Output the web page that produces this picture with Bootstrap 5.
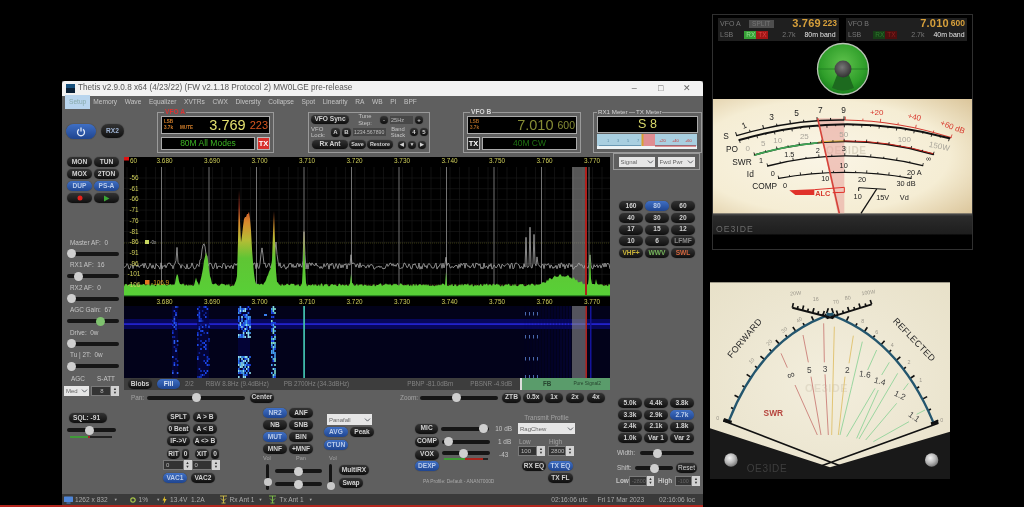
<!DOCTYPE html>
<html lang="en">
<head>
<meta charset="UTF-8">
<meta name="viewport" content="width=device-width, initial-scale=1.0">
<title>Thetis</title>
<link href="https://cdn.jsdelivr.net/npm/bootstrap@5.3.0/dist/css/bootstrap.min.css" rel="stylesheet">
<style>
html, body { height: 100%; margin: 0; background: #000; overflow: hidden; font-family: "Liberation Sans", Arial, sans-serif; }
.desk-window { position: absolute; filter: blur(.55px); }
.progress-line { position: absolute; left: 0; top: 505px; width: 703px; height: 2px; background: #b3261e; }

/* main radio window */
.thetis { left: 62px; top: 81px; width: 641px; height: 424px; background: #5f5f5f; display: flex; flex-direction: column; overflow: hidden; }
.title-bar { height: 15px; background: #f2f2f2; color: #555; font-size: 8.2px; display: flex; align-items: center; padding-left: 4px; gap: 3px; border-radius: 3px 3px 0 0; }
.title-icon { width: 9px; height: 9px; background: linear-gradient(#16507c 50%, #0b2036 50%); }
.title-ctl { width: 23.5px; text-align: center; color: #666; font-size: 9px; line-height: 1; }
.menu-row { height: 12px; display: flex; color: #c4c4c4; font-size: 6.6px; align-items: center; padding-left: 3px; }
.menu-row span { padding: 0 3.1px; margin-right: 1.4px; white-space: nowrap; }
.menu-row .menu-hot { background: #b9d5ee; color: #8aa; padding: 2px 4px; margin-right: 0; }

.rig-grid { display: grid; grid-template-columns: 62px 486px 93px; grid-template-rows: 49px 233px 15px 89px; }
.rig-top { grid-column: 1 / 4; display: flex; align-items: flex-start; }
.rig-left { grid-column: 1; grid-row: 2 / 4; padding-left: 5px; }
.rig-centre { grid-column: 2; grid-row: 2; }
.rig-panrow { grid-column: 2; grid-row: 3; display: flex; align-items: center; }
.rig-right { grid-column: 3; grid-row: 2 / 5; margin-top: -4px; }
.rig-bottom { grid-column: 1 / 3; grid-row: 4; display: flex; align-items: flex-start; }

.btn.rig-pill { display: flex; align-items: center; justify-content: center; height: 10px; padding: 0; border: 0; border-radius: 5px; background: linear-gradient(#333, #0f0f0f); color: #d2d2d2; font-size: 6.6px; font-weight: 700; line-height: 1; white-space: nowrap; box-shadow: 0 0 1px #222; }
.btn.rig-on { background: linear-gradient(#3f6fc4, #1f4590); color: #b9cbea; }
.pill-grid { display: grid; gap: 2px; }
.rig-label { color: #c6c6c6; font-size: 6.4px; line-height: 10px; white-space: nowrap; }
.dim-label { color: #a3a3a3; }

.form-range.rig-range { display: block; height: 12px; padding: 0; }
.rig-range::-webkit-slider-runnable-track { height: 4px; background: #161616; border-radius: 2px; }
.rig-range::-webkit-slider-thumb { width: 9px; height: 9px; margin-top: -2.5px; background: #cfcfcf; border-radius: 50%; }
.rig-range-green::-webkit-slider-thumb { background: #7fc26f; }

.form-select.rig-select { height: 10px; min-height: 0; padding: 0 8px 0 2px; font-size: 6px; line-height: 10px; color: #666; background-color: #e6e6e6; background-position: right 1px center; background-size: 7px 6px; border: 0; border-radius: 0; }
.rig-spin { display: flex; height: 10px; font-size: 6px; line-height: 10px; color: #bbb; }
.rig-spin-val { flex: 1; background: #333; padding-left: 2px; border: 1px solid #7a7a7a; line-height: 8px; }
.rig-spin-arrows { width: 8px; background: #d2d2d2; color: #333; font-size: 4px; line-height: 4.5px; text-align: center; display: flex; flex-direction: column; justify-content: center; }

.rig-group { position: relative; margin-top: 4px; height: 41px; border: 1.5px solid #9a9a9a; }
.rig-legend { position: absolute; top: -6px; left: 6px; background: #5f5f5f; padding: 0 1px; font-size: 6.6px; line-height: 10px; font-weight: 700; color: #d5d5d5; white-space: nowrap; }
.vfo-top { height: 18px; margin: 3px 3px 0; background: #000; border: 1px solid #aaa; display: flex; align-items: center; position: relative; }
.vfo-tiny { font-size: 4.6px; font-weight: 700; color: #d5802b; line-height: 6.5px; padding-left: 2px; width: 16px; }
.vfo-freq { font-size: 14.5px; line-height: 1; margin-left: auto; }
.vfo-sub { font-size: 11px; line-height: 1; margin: 1px 1px 0 4px; }
.vfo-low { display: flex; gap: 2px; margin: 2.5px 3px 0; height: 13px; }
.vfo-band { flex: 1; background: #000; border: 1px solid #aaa; text-align: center; font-size: 8.5px; line-height: 11px; }
.vfo-tx { width: 13px; font-size: 7.5px; font-weight: 700; line-height: 11px; text-align: center; color: #fff; border: 1px solid #bbb; }

.sync-row { display: flex; align-items: center; }
.sync-box { background: #474747; color: #bbb; font-size: 5.6px; line-height: 8px; height: 8px; padding-left: 1px; white-space: nowrap; overflow: hidden; }
.btn.rig-round { width: 8px; height: 8px; font-size: 6px; border-radius: 4px; flex: none; }

.info-bar { height: 12px; background: #3d3d3d; color: #828282; font-size: 6.3px; display: flex; align-items: center; white-space: nowrap; }
.fb-box { margin-left: auto; width: 90px; height: 12px; background: #5a9c6b; border-left: 2px solid #ddd; display: flex; align-items: center; color: #27452f; }

.vslide { width: 3px; height: 26px; background: #151515; border-radius: 2px; display: flex; flex-direction: column; justify-content: flex-end; align-items: center; }
.vslide-knob { flex: none; width: 8px; height: 8px; border-radius: 50%; background: #c8c8c8; margin-bottom: 4px; }
.level-bar { height: 2px; display: flex; background: #222; }
.level-g { background: #3f9a37; }
.level-r { background: #a8241c; }

.status-bar { height: 11px; background: #3a3a3a; color: #aaa; font-size: 6.6px; display: flex; align-items: center; white-space: nowrap; }
.status-bar svg { flex: none; }

/* multimeter window */
.mm-window { left: 712px; top: 14px; width: 261px; height: 236px; border: 1px solid #303030; display: flex; flex-direction: column; background: #000; }
.mm-head { display: flex; gap: 7px; padding: 3px 5px 0; }
.mm-panel { height: 23px; background: #1f1f1f; color: #777; font-size: 7px; padding: 0 2px; flex: 1; }
.mm-line { display: flex; align-items: center; height: 11.5px; white-space: nowrap; }
.mm-chip { display: inline-block; height: 8px; line-height: 8px; padding: 0 2px; font-size: 6.5px; text-align: center; }
.mm-freq { margin-left: auto; color: #d7a03b; font-size: 11px; font-weight: 700; line-height: 1; letter-spacing: .2px; }
.mm-sub { color: #d7a03b; font-size: 8.5px; font-weight: 700; margin-left: 2px; }
.mm-band { color: #e5e5e5; margin-left: 9px; }
.mm-svg { display: block; }

/* swr window */
.swr-window { left: 709px; top: 279px; width: 242px; height: 209px; background: #000; }
.swr-window svg { display: block; }
</style>
</head>
<body>

<div class="progress-line"></div>

<div class="desk-window thetis">
  <div class="title-bar">
    <div class="title-icon"></div>
    <span>Thetis v2.9.0.8 x64 (4/23/22) (FW v2.1.18 Protocol 2) MW0LGE pre-release</span>
    <span class="title-ctl ms-auto">&#8211;</span><span class="title-ctl">&#9633;</span><span class="title-ctl me-1">&#10005;</span>
  </div>
  <div class="menu-row">
    <span class="menu-hot">Setup</span><span>Memory</span><span>Wave</span><span>Equalizer</span><span>XVTRs</span><span>CWX</span><span>Diversity</span><span>Collapse</span><span>Spot</span><span>Linearity</span><span>RA</span><span>WB</span><span>PI</span><span>BPF</span>
  </div>

  <div class="rig-grid">
    <div class="rig-top">
      <button class="btn rig-pill rig-on ms-1" style="width:30px;height:15px;border-radius:8px;margin-top:16px">
        <svg width="10" height="10" viewBox="0 0 10 10"><path d="M3 2.4A3.5 3.5 0 1 0 7 2.4" fill="none" stroke="#dfe8f7" stroke-width="1.3"/><path d="M5 .6V4.6" stroke="#dfe8f7" stroke-width="1.3"/></svg>
      </button>
      <button class="btn rig-pill" style="width:23px;height:14px;border-radius:7px;margin:16px 0 0 5px;color:#9fb4d4">RX2</button>

      <div class="rig-group" style="width:117px;margin-left:33px">
        <span class="rig-legend" style="color:#d33">VFO A</span>
        <div class="vfo-top">
          <div class="vfo-tiny">LSB<br>3.7k</div>
          <div class="vfo-tiny" style="width:auto;align-self:flex-end;padding-bottom:2px">MUTE</div>
          <span class="vfo-freq" style="color:#e3e06e">3.769</span><span class="vfo-sub" style="color:#d4551f">223</span>
        </div>
        <div class="vfo-low">
          <div class="vfo-band" style="color:#3cb423">80M All Modes</div>
          <div class="vfo-tx" style="background:#d8312d">TX</div>
        </div>
      </div>

      <div class="rig-group" style="width:122px;margin-left:34px">
        <div class="sync-row" style="height:12px;padding:1px 0 0 2px">
          <button class="btn rig-pill" style="width:38px;height:9px">VFO Sync</button>
          <span class="rig-label text-center" style="width:26px;margin-left:3px;line-height:6.5px;font-size:5.8px">Tune<br>Step:</span>
          <button class="btn rig-pill rig-round" style="margin-left:2px">-</button>
          <span class="sync-box" style="width:23px;margin-left:2px">25Hz</span>
          <button class="btn rig-pill rig-round" style="margin-left:2px">+</button>
        </div>
        <div class="sync-row" style="height:13px;padding:1px 0 0 2px">
          <span class="rig-label" style="width:20px;line-height:6.5px;font-size:6px">VFO<br>Lock:</span>
          <button class="btn rig-pill rig-round" style="width:9px;height:9px;margin-right:2px">A</button>
          <button class="btn rig-pill rig-round" style="width:9px;height:9px">B</button>
          <span class="sync-box" style="width:33px;margin-left:2px;font-size:5.2px">1234.567890</span>
          <span class="rig-label text-center" style="width:24px;line-height:6.5px;font-size:5.8px">Band<br>Stack</span>
          <button class="btn rig-pill rig-round" style="margin-right:2px">4</button>
          <button class="btn rig-pill rig-round">5</button>
        </div>
        <div class="sync-row" style="height:12px;padding:1px 0 0 2px">
          <button class="btn rig-pill" style="width:36px;height:9px;margin-left:1px">Rx Ant</button>
          <button class="btn rig-pill" style="width:17px;height:9px;margin-left:1px;font-size:5.4px">Save</button>
          <button class="btn rig-pill" style="width:26px;height:9px;margin-left:1px;font-size:5.4px">Restore</button>
          <button class="btn rig-pill rig-round" style="margin-left:5px;margin-right:2px;font-size:5px">&#9664;</button>
          <button class="btn rig-pill rig-round" style="margin-right:2px;font-size:5px">&#9660;</button>
          <button class="btn rig-pill rig-round" style="font-size:5px">&#9654;</button>
        </div>
      </div>

      <div class="rig-group" style="width:118px;margin-left:33px">
        <span class="rig-legend">VFO B</span>
        <div class="vfo-top">
          <div class="vfo-tiny" style="opacity:.8">LSB<br>3.7k</div>
          <span class="vfo-freq" style="color:#868d35">7.010</span><span class="vfo-sub" style="color:#868d35;font-size:10.5px">600</span>
        </div>
        <div class="vfo-low">
          <div class="vfo-tx" style="background:#222">TX</div>
          <div class="vfo-band" style="color:#1f7312">40M CW</div>
        </div>
      </div>

      <div class="rig-group" style="width:109px;margin-left:12px">
        <span class="rig-legend" style="font-weight:400;left:3px;font-size:6.2px">RX1 Meter</span>
        <span class="rig-legend" style="font-weight:400;left:41px;font-size:6.2px">TX Meter</span>
        <div class="vfo-top d-block text-center" style="height:17px;margin-top:3px;color:#d9d86a;font-size:12.5px;line-height:15px;font-weight:500">S 8</div>
        <svg width="100" height="15" viewBox="0 0 100 15" style="display:block;margin:1px 0 0 3px">
          <rect width="100" height="15" fill="#a9cfe0"/><rect y="12" width="100" height="3" fill="#eef4f6"/>
          <rect x="46" width="12" height="12" fill="#e08d92"/><rect x="44.5" width="2" height="12" fill="#d8a030"/>
          <path d="M2 11.5H44M58 11.5H99" stroke="#5b8ca8" stroke-width=".8"/><path d="M58 12H99" stroke="#c33" stroke-width="1"/>
          <text x="10" y="8" font-size="4" fill="#5f8fa8">1</text><text x="20" y="8" font-size="4" fill="#5f8fa8">3</text><text x="30" y="8" font-size="4" fill="#5f8fa8">5</text><text x="40" y="8" font-size="4" fill="#5f8fa8">7</text>
          <text x="62" y="8" font-size="4" fill="#c33">+20</text><text x="75" y="8" font-size="4" fill="#c33">+40</text><text x="88" y="8" font-size="4" fill="#c33">+60</text>
        </svg>
      </div>
    </div>

    <div class="rig-left">
      <div class="pill-grid" style="grid-template-columns:25px 25px">
        <button class="btn rig-pill">MON</button><button class="btn rig-pill">TUN</button>
        <button class="btn rig-pill">MOX</button><button class="btn rig-pill">2TON</button>
        <button class="btn rig-pill rig-on">DUP</button><button class="btn rig-pill rig-on">PS-A</button>
        <button class="btn rig-pill"><svg width="6" height="6" viewBox="0 0 6 6"><circle cx="3" cy="3" r="2.5" fill="#e4211c"/></svg></button>
        <button class="btn rig-pill"><svg width="7" height="7" viewBox="0 0 7 7"><path d="M1 .5L6.5 3.5L1 6.5Z" fill="#3aa635"/></svg></button>
      </div>
      <div style="margin-top:34.500px;width:52px">
        <div class="rig-label" style="padding-left:3px">Master AF:&nbsp; 0</div>
        <input type="range" class="form-range rig-range" min="0" max="100" value="0">
        <div class="rig-label" style="padding-left:3px;margin-top:.6px">RX1 AF:&nbsp; 16</div>
        <input type="range" class="form-range rig-range" min="0" max="100" value="16">
        <div class="rig-label" style="padding-left:3px;margin-top:.6px">RX2 AF:&nbsp; 0</div>
        <input type="range" class="form-range rig-range" min="0" max="100" value="0">
        <div class="rig-label" style="padding-left:3px;margin-top:.6px">AGC Gain:&nbsp; 67</div>
        <input type="range" class="form-range rig-range rig-range-green" min="0" max="100" value="67">
        <div class="rig-label" style="padding-left:3px;margin-top:.6px">Drive:&nbsp; 0w</div>
        <input type="range" class="form-range rig-range" min="0" max="100" value="0">
        <div class="rig-label" style="padding-left:3px;margin-top:.6px">Tu | 2T:&nbsp; 0w</div>
        <input type="range" class="form-range rig-range" min="0" max="100" value="0">
      </div>
      <div class="d-flex rig-label" style="margin-top:1.4px;padding-left:4px"><span style="width:26px">AGC</span><span>S-ATT</span></div>
      <div class="d-flex" style="margin-top:2.500px;margin-left:-3px;gap:2px;width:55px">
        <select class="form-select rig-select" style="width:25px"><option>Med</option></select>
        <div class="rig-spin" style="width:28px"><span class="rig-spin-val text-center">8</span><span class="rig-spin-arrows"><span>&#9650;</span><span>&#9660;</span></span></div>
      </div>
    </div>

    <div class="rig-centre">
      <svg id="pan" width="486" height="221" viewBox="124 157 486 221" style="display:block">
        <defs>
          <linearGradient id="peakFill" gradientUnits="userSpaceOnUse" x1="0" y1="296" x2="0" y2="206">
            <stop offset="0" stop-color="#58d037"/><stop offset=".42" stop-color="#5fc534"/><stop offset=".62" stop-color="#b5bd35"/><stop offset=".82" stop-color="#d98a2c"/><stop offset="1" stop-color="#c8402a"/>
          </linearGradient>
        </defs>
        <rect x="124" y="157" width="486" height="221" fill="#000"/>
        <g id="panGrid"></g>
        <rect x="572" y="167" width="15" height="129" fill="#8a8a8a" opacity=".62"/>
        <g id="panTrace"></g>
        <rect x="585" y="167" width="2" height="129" fill="#b0201c"/>
        <rect x="124" y="295" width="486" height="1.3" fill="#2f8a22"/>
        <g id="fall"></g>
        <rect x="572" y="306" width="15" height="72" fill="#8a8a8a" opacity=".6"/>
        <rect x="585.5" y="306" width="1.5" height="72" fill="#b0201c"/>
        <g id="panText" font-family="Liberation Sans, Arial, sans-serif" font-size="6.4" fill="#cfcf5a"></g>
        <rect x="124" y="156.5" width="5" height="4" fill="#e01010"/>
      </svg>
      <div class="info-bar">
        <button class="btn rig-pill ms-1" style="width:24px">Blobs</button>
        <button class="btn rig-pill rig-on" style="width:23px;margin-left:5px;color:#dbe5f5">Fill</button>
        <span style="margin-left:5px">2/2</span>
        <span style="margin-left:12px">RBW 8.8Hz (9.4dBHz)</span>
        <span style="margin-left:15px">PB 2700Hz (34.3dBHz)</span>
        <span style="margin-left:58px">PBNP -81.0dBm</span>
        <span style="margin-left:17px">PBSNR -4.9dB</span>
        <div class="fb-box">
          <span style="margin-left:21px;font-weight:700">FB</span>
          <span style="margin-left:22px;font-size:4.8px">Pure Signal2</span>
        </div>
      </div>
    </div>

    <div class="rig-panrow">
      <span class="rig-label dim-label" style="width:23px;padding-left:7px">Pan:</span>
      <input type="range" class="form-range rig-range" style="width:98px" min="0" max="100" value="50">
      <button class="btn rig-pill" style="width:24px;margin-left:5px">Center</button>
      <span class="rig-label dim-label" style="margin-left:126px;width:20px">Zoom:</span>
      <input type="range" class="form-range rig-range" style="width:78px" min="0" max="100" value="47">
      <button class="btn rig-pill" style="width:19px;margin-left:4px">ZTB</button>
      <button class="btn rig-pill" style="width:20px;margin-left:2px">0.5x</button>
      <button class="btn rig-pill" style="width:18px;margin-left:2px">1x</button>
      <button class="btn rig-pill" style="width:18px;margin-left:3px">2x</button>
      <button class="btn rig-pill" style="width:18px;margin-left:3px">4x</button>
    </div>

    <div class="rig-right">
      <div class="d-flex align-items-center" style="width:87px;height:17px;margin-left:3px;border:1.5px solid #9a9a9a;gap:3px;padding-left:4.5px">
        <select class="form-select rig-select" style="width:36px"><option>Signal</option></select>
        <select class="form-select rig-select" style="width:37px"><option>Fwd Pwr</option></select>
      </div>
      <div class="pill-grid" style="grid-template-columns:24px 24px 24px;margin:31px 0 0 9px;column-gap:2px;row-gap:1.8px">
        <button class="btn rig-pill">160</button><button class="btn rig-pill rig-on">80</button><button class="btn rig-pill">60</button>
        <button class="btn rig-pill">40</button><button class="btn rig-pill">30</button><button class="btn rig-pill">20</button>
        <button class="btn rig-pill">17</button><button class="btn rig-pill">15</button><button class="btn rig-pill">12</button>
        <button class="btn rig-pill">10</button><button class="btn rig-pill">6</button><button class="btn rig-pill" style="color:#8a8a8a">LFMF</button>
        <button class="btn rig-pill" style="color:#c9b337">VHF+</button><button class="btn rig-pill" style="color:#75b55a">WWV</button><button class="btn rig-pill" style="color:#d3663e">SWL</button>
      </div>
      <div class="pill-grid" style="grid-template-columns:24px 24px 24px;margin:140px 0 0 8px;column-gap:2px;row-gap:1.7px">
        <button class="btn rig-pill">5.0k</button><button class="btn rig-pill">4.4k</button><button class="btn rig-pill">3.8k</button>
        <button class="btn rig-pill">3.3k</button><button class="btn rig-pill">2.9k</button><button class="btn rig-pill rig-on">2.7k</button>
        <button class="btn rig-pill">2.4k</button><button class="btn rig-pill">2.1k</button><button class="btn rig-pill">1.8k</button>
        <button class="btn rig-pill">1.0k</button><button class="btn rig-pill">Var 1</button><button class="btn rig-pill">Var 2</button>
      </div>
      <div class="d-flex align-items-center" style="margin:4px 0 0 7px">
        <span class="rig-label" style="width:23px">Width:</span>
        <input type="range" class="form-range rig-range" style="width:54px" min="0" max="100" value="28">
      </div>
      <div class="d-flex align-items-center" style="margin:3px 0 0 7px">
        <span class="rig-label" style="width:18px">Shift:</span>
        <input type="range" class="form-range rig-range" style="width:38px" min="0" max="100" value="50">
        <button class="btn rig-pill" style="width:21px;margin-left:3px;font-weight:400">Reset</button>
      </div>
      <div class="d-flex align-items-center" style="margin:2px 0 0 6px">
        <span class="rig-label" style="width:13px;font-weight:700">Low</span>
        <div class="rig-spin" style="width:25px"><span class="rig-spin-val" style="color:#666;font-size:5.4px">-2800</span><span class="rig-spin-arrows"><span>&#9650;</span><span>&#9660;</span></span></div>
        <span class="rig-label" style="width:17px;margin-left:4px;font-weight:700">High</span>
        <div class="rig-spin" style="width:25px"><span class="rig-spin-val" style="color:#666;font-size:5.4px">-100</span><span class="rig-spin-arrows"><span>&#9650;</span><span>&#9660;</span></span></div>
      </div>
    </div>

    <div class="rig-bottom">
      <!-- squelch -->
      <div style="width:98px;padding:8px 0 0 7px">
        <button class="btn rig-pill justify-content-start ps-1" style="width:38px">SQL: -91</button>
        <input type="range" class="form-range rig-range" style="width:49px;margin:1px 0 0 -2px" min="0" max="100" value="45">
        <div class="level-bar" style="width:42px;margin:-.5px 0 0 1px"><div class="level-g" style="width:18px"></div><div class="level-r" style="width:2px"></div></div>
      </div>
      <!-- vfo buttons -->
      <div style="width:57px;margin-left:3px;padding-top:7px">
        <div class="pill-grid ms-1" style="grid-template-columns:23px 24px;column-gap:3px">
          <button class="btn rig-pill">SPLT</button><button class="btn rig-pill">A &gt; B</button>
          <button class="btn rig-pill">0 Beat</button><button class="btn rig-pill">A &lt; B</button>
          <button class="btn rig-pill">IF-&gt;V</button><button class="btn rig-pill">A &lt;&gt; B</button>
        </div>
        <div class="d-flex ms-1" style="margin-top:3px">
          <button class="btn rig-pill" style="width:13px">RIT</button><button class="btn rig-pill" style="width:7px;margin-left:2px">0</button>
          <button class="btn rig-pill" style="width:14px;margin-left:6px">XIT</button><button class="btn rig-pill" style="width:8px;margin-left:2px">0</button>
        </div>
        <div class="d-flex" style="margin-top:1px">
          <div class="rig-spin" style="width:28.5px"><span class="rig-spin-val">0</span><span class="rig-spin-arrows"><span>&#9650;</span><span>&#9660;</span></span></div>
          <div class="rig-spin" style="width:28.5px"><span class="rig-spin-val">0</span><span class="rig-spin-arrows"><span>&#9650;</span><span>&#9660;</span></span></div>
        </div>
        <div class="d-flex" style="margin-top:3px;gap:4px">
          <button class="btn rig-pill rig-on" style="width:24px">VAC1</button>
          <button class="btn rig-pill" style="width:24px">VAC2</button>
        </div>
      </div>
      <!-- dsp -->
      <div style="width:111px;margin-left:43px;padding-top:3px">
        <div class="d-flex" style="height:46px">
          <div class="pill-grid" style="grid-template-columns:24px 24px;gap:2px 2px;align-content:start">
            <button class="btn rig-pill rig-on">NR2</button><button class="btn rig-pill">ANF</button>
            <button class="btn rig-pill">NB</button><button class="btn rig-pill">SNB</button>
            <button class="btn rig-pill rig-on">MUT</button><button class="btn rig-pill">BIN</button>
            <button class="btn rig-pill">MNF</button><button class="btn rig-pill">+MNF</button>
          </div>
          <div style="margin-left:11px;padding-top:6px">
            <select class="form-select rig-select" style="width:45px;margin-left:3px;height:11px"><option>Panafall</option></select>
            <div class="d-flex" style="margin-top:2px;gap:2px">
              <button class="btn rig-pill rig-on" style="width:24px">AVG</button><button class="btn rig-pill" style="width:24px">Peak</button>
            </div>
            <button class="btn rig-pill rig-on" style="width:24px;margin-top:3px">CTUN</button>
          </div>
        </div>
        <div class="d-flex rig-label dim-label" style="height:8px;line-height:8px;font-size:5.6px">
          <span style="margin-left:0;width:33px">Vol</span><span style="width:33px">Pan</span><span>Vol</span>
        </div>
        <div class="d-flex" style="margin-top:2px">
          <div class="vslide" style="margin-left:3px"><div class="vslide-knob"></div></div>
          <div style="width:47px;margin-left:6px;padding-top:1px">
            <input type="range" class="form-range rig-range" min="0" max="100" value="50">
            <input type="range" class="form-range rig-range" style="margin-top:1px" min="0" max="100" value="50">
          </div>
          <div class="vslide" style="margin-left:7px"><div class="vslide-knob" style="margin-bottom:0"></div></div>
          <div style="margin-left:7px;padding-top:1px">
            <button class="btn rig-pill" style="width:30px">MultiRX</button>
            <button class="btn rig-pill" style="width:24px;margin-top:3px">Swap</button>
          </div>
        </div>
      </div>
      <!-- mic / tx -->
      <div style="width:97px;margin-left:41px;padding-top:17px">
        <div class="d-flex align-items-center" style="height:13px">
          <button class="btn rig-pill" style="width:24px">MIC</button>
          <input type="range" class="form-range rig-range" style="width:48px;margin-left:3px" min="0" max="100" value="96">
          <span class="rig-label" style="margin-left:6px">10 dB</span>
        </div>
        <div class="d-flex align-items-center" style="height:13px">
          <button class="btn rig-pill" style="width:24px">COMP</button>
          <input type="range" class="form-range rig-range" style="width:48px;margin-left:3px" min="0" max="100" value="5">
          <span class="rig-label" style="margin-left:8px">1 dB</span>
        </div>
        <div class="d-flex align-items-center" style="height:13px">
          <button class="btn rig-pill" style="width:24px">VOX</button>
          <div style="width:48px;margin-left:3px;height:13px">
            <input type="range" class="form-range rig-range" style="height:10px" min="0" max="100" value="44">
            <div class="level-bar" style="margin-left:2px;width:44px"><div class="level-g" style="width:21px"></div><div class="level-r" style="width:18px"></div></div>
          </div>
          <span class="rig-label" style="margin-left:9px">-43</span>
        </div>
        <button class="btn rig-pill rig-on" style="width:24px">DEXP</button>
        <div class="rig-label" style="font-size:4.9px;margin:6px 0 0 8px;color:#aaa">PA Profile: Default - ANAN7000D</div>
      </div>
      <div style="width:57px;margin-left:6px;padding-top:8px">
        <div class="rig-label text-center dim-label" style="height:10px">Transmit Profile</div>
        <select class="form-select rig-select" style="height:11px"><option>RagChew</option></select>
        <div class="d-flex rig-label dim-label" style="margin-top:3px;height:9px;line-height:9px;padding-left:1px"><span style="width:30px">Low</span><span>High</span></div>
        <div class="d-flex" style="gap:3px;margin-top:0">
          <div class="rig-spin" style="width:27px"><span class="rig-spin-val">100</span><span class="rig-spin-arrows"><span>&#9650;</span><span>&#9660;</span></span></div>
          <div class="rig-spin" style="width:26px"><span class="rig-spin-val">2800</span><span class="rig-spin-arrows"><span>&#9650;</span><span>&#9660;</span></span></div>
        </div>
        <div class="d-flex" style="margin:5px 0 0 4px;gap:2px">
          <button class="btn rig-pill" style="width:24px">RX EQ</button>
          <button class="btn rig-pill rig-on" style="width:25px">TX EQ</button>
        </div>
        <button class="btn rig-pill" style="width:25px;margin:2px 0 0 30px">TX FL</button>
      </div>
    </div>
  </div>

  <div class="status-bar">
    <svg width="9" height="8" viewBox="0 0 9 8" style="margin-left:2px"><rect y=".5" width="9" height="5.5" rx=".6" fill="#4f86d8"/><rect x="2.5" y="6.5" width="4" height="1" fill="#4f86d8"/></svg>
    <span style="margin-left:2px">1262 x 832</span><span style="margin-left:6px;font-size:4px">&#9660;</span>
    <svg width="6" height="6" viewBox="0 0 6 6" style="margin-left:12px"><circle cx="3" cy="3" r="2.2" fill="none" stroke="#a9c84a" stroke-width="1.2"/></svg>
    <span style="margin-left:3px">1%</span><span style="margin-left:8px;font-size:4px">&#9660;</span>
    <svg width="5" height="8" viewBox="0 0 5 8" style="margin-left:2px"><path d="M3 0L.5 4.5H2.2L1.6 8L4.6 3H2.8Z" fill="#e3c02c"/></svg>
    <span style="margin-left:3px">13.4V&nbsp;&nbsp;1.2A</span>
    <svg width="9" height="9" viewBox="0 0 9 9" style="margin-left:14px"><path d="M1 1H8M4.5 1V8M2.5 8H6.5M2 3.5L4.5 6L7 3.5" fill="none" stroke="#d5c24a" stroke-width=".9"/></svg>
    <span style="margin-left:2px">Rx Ant 1</span><span style="margin-left:4px;font-size:4px">&#9660;</span>
    <svg width="9" height="9" viewBox="0 0 9 9" style="margin-left:6px"><path d="M1 1H8M4.5 1V8M2.5 8H6.5M2 3.5L4.5 6L7 3.5" fill="none" stroke="#7fc24a" stroke-width=".9"/></svg>
    <span style="margin-left:2px">Tx Ant 1</span><span style="margin-left:5px;font-size:4px">&#9660;</span>
    <span style="margin-left:auto">02:16:06 utc</span>
    <span style="margin-left:10px">Fri 17 Mar 2023</span>
    <span style="margin-left:15px;margin-right:8px">02:16:06 loc</span>
  </div>
</div>

<div class="desk-window mm-window">
  <div class="mm-head">
    <div class="mm-panel">
      <div class="mm-line">VFO A<span class="mm-chip ms-2" style="background:#4e4e4e;width:25px">SPLIT</span><span class="mm-freq">3.769</span><span class="mm-sub">223</span></div>
      <div class="mm-line">LSB<span class="mm-chip" style="background:#37a137;color:#8fdc8f;margin-left:11px;width:12px">RX</span><span class="mm-chip" style="background:#a31616;color:#d44;width:12px">TX</span><span style="margin-left:14px">2.7k</span><span class="mm-band">80m band</span></div>
    </div>
    <div class="mm-panel">
      <div class="mm-line">VFO B<span class="mm-freq">7.010</span><span class="mm-sub">600</span></div>
      <div class="mm-line">LSB<span class="mm-chip" style="background:#173f17;color:#2d7a2d;margin-left:12px;width:12px">RX</span><span class="mm-chip" style="background:#4f0e0e;color:#8e1e1e;width:12px">TX</span><span style="margin-left:14px">2.7k</span><span class="mm-band">40m band</span></div>
    </div>
  </div>
  <svg class="mm-svg mx-auto" width="56" height="58" viewBox="0 0 56 58">
    <defs>
      <radialGradient id="knobGreen" cx=".5" cy=".4" r=".62"><stop offset="0" stop-color="#5fc24c"/><stop offset=".7" stop-color="#2f9e2a"/><stop offset="1" stop-color="#157a1a"/></radialGradient>
      <radialGradient id="knobHub" cx=".45" cy=".4" r=".6"><stop offset="0" stop-color="#777"/><stop offset="1" stop-color="#333"/></radialGradient>
    </defs>
    <circle cx="28" cy="28" r="25.5" fill="url(#knobGreen)" stroke="#b8c4b4" stroke-width="1.3"/>
    <path d="M17 47L22 34H34L39 47A25 25 0 0 1 17 47Z" fill="#1d6a1f"/>
    <path d="M3.5 28H52.5" stroke="#1f7a22" stroke-width=".8"/>
    <circle cx="28" cy="28" r="8.5" fill="url(#knobHub)"/>
  </svg>
  <svg class="mm-svg" width="259" height="150" viewBox="21 12 777 450" id="mmFace" font-family="Liberation Sans, Arial, sans-serif">
    <defs>
      <radialGradient id="faceCream" cx=".42" cy=".5" r=".75"><stop offset="0" stop-color="#faf5e6"/><stop offset=".65" stop-color="#f5edd4"/><stop offset="1" stop-color="#dcc79d"/></radialGradient>
      <linearGradient id="faceBase" x1="0" y1="0" x2="0" y2="1"><stop offset="0" stop-color="#555"/><stop offset=".08" stop-color="#2b2b2b"/><stop offset=".55" stop-color="#1e1e1e"/><stop offset=".6" stop-color="#000"/></linearGradient>
    </defs>
    <rect x="21" y="12" width="780" height="345" fill="url(#faceCream)"/>
    <rect x="21" y="355" width="780" height="110" fill="url(#faceBase)"/>
    <text x="30" y="410" font-size="26" fill="#6a6a6a" letter-spacing="3">OE3IDE</text>
    <text x="360" y="176" font-size="30" font-weight="700" fill="#ddd6c2" letter-spacing="2">OE3IDE</text>
    <path d="M335 70H415V355H395Z" fill="#e9a7a0" opacity=".6"/>

    <g fill="none" stroke-linecap="round">
      <path d="M92 122Q253.500 73.500 414 75" stroke="#111" stroke-width="4"/>
      <path d="M418 75Q575 76.500 735 128" stroke="#d33a30" stroke-width="3.500"/>
      <path d="M100 135Q415 43 730 130" stroke="#111" stroke-width="6"/>
      <path d="M146 180Q415 100 682 178" stroke="#111" stroke-width="5"/>
      <path d="M146 180Q415 100 682 178" stroke="#3fa655" stroke-width="5" pathLength="100" stroke-dasharray="35 65"/>
      <path d="M146 178Q415 98 682 176" stroke="#e3b23a" stroke-width="3" pathLength="100" stroke-dasharray="0 36 14 50"/>
      <path d="M146 178Q415 98 682 176" stroke="#c8281f" stroke-width="3" pathLength="100" stroke-dasharray="0 50 50 0"/>
      <path d="M185 213Q415 153 650 212" stroke="#111" stroke-width="4"/>
      <path d="M218 250Q415 214 615 250" stroke="#111" stroke-width="4"/>
    </g>
    <g id="mmTicks"></g>

    <path d="M335 70L400 355" stroke="#d5433a" stroke-width="5"/>
    <path d="M250 286L325 283V300H268Z" fill="#e0312a"/>
    <path d="M325 284L415 277V292L380 293" fill="none" stroke="#e0312a" stroke-width="3"/>
    <path d="M458 288V278L540 283" fill="none" stroke="#111" stroke-width="3"/>
    <path d="M465 355L512 282" stroke="#111" stroke-width="4"/>

    <g font-size="25" fill="#222" text-anchor="middle">
      <text x="60" y="131">S</text><text x="115" y="100" transform="rotate(-25 115 92)">1</text><text x="197" y="75">3</text><text x="272" y="62">5</text><text x="343" y="55">7</text><text x="413" y="53">9</text>
      <text x="78" y="171">PO</text><text x="108" y="209">SWR</text><text x="133" y="245">Id</text><text x="176" y="283">COMP</text>
    </g>
    <g font-size="24" fill="#d8372c" text-anchor="middle" font-weight="500">
      <text x="512" y="59">+20</text><text x="625" y="74" transform="rotate(12 625 66)">+40</text><text x="740" y="104" transform="rotate(20 740 96)">+60 dB</text>
    </g>
    <g font-size="24" fill="#aaa69b" text-anchor="middle">
      <text x="125" y="167">0</text><text x="172" y="154">5</text><text x="215" y="144">10</text><text x="295" y="132">25</text><text x="413" y="126">50</text><text x="595" y="141">100</text><text x="700" y="162" transform="rotate(12 700 155)">150W</text>
    </g>
    <g font-size="22" fill="#222" text-anchor="middle">
      <text x="165" y="205">1</text><text x="250" y="187">1.5</text><text x="335" y="174">2</text><text x="413" y="169">3</text><text x="668" y="197">&#8734;</text>
      <text x="200" y="243">0</text><text x="413" y="218">10</text><text x="625" y="241">20 A</text>
      <text x="237" y="280">0</text><text x="358" y="259">10</text><text x="468" y="261">20</text><text x="600" y="273">30 dB</text>
      <text x="455" y="312">10</text><text x="530" y="315">15V</text><text x="595" y="315">Vd</text>
    </g>
    <text x="350" y="302" font-size="22" fill="#d8372c" text-anchor="middle" font-weight="700">ALC</text>
  </svg>
</div>

<div class="desk-window swr-window">
  <svg width="242" height="209" viewBox="12 12 726 627" id="swrFace" font-family="Liberation Sans, Arial, sans-serif">
    <defs>
      <radialGradient id="swrCream" cx=".5" cy=".5" r=".8"><stop offset="0" stop-color="#f3eedd"/><stop offset="1" stop-color="#e6dfc6"/></radialGradient>
      <radialGradient id="screw" cx=".4" cy=".35" r=".7"><stop offset="0" stop-color="#f2f2f2"/><stop offset=".55" stop-color="#b7b7b7"/><stop offset="1" stop-color="#6f6f6f"/></radialGradient>
    </defs>
    <rect x="12" y="12" width="726" height="627" fill="#000"/>
    <rect x="15" y="22" width="720" height="590" fill="url(#swrCream)"/>
    <path d="M15 460L375 577L735 470V612H15Z" fill="#191919"/>
    <text x="125" y="591" font-size="30" fill="#3e3e3e" letter-spacing="2">OE3IDE</text>
    <circle cx="78" cy="555" r="20" fill="url(#screw)"/><circle cx="680" cy="555" r="20" fill="url(#screw)"/>
    <text x="300" y="350" font-size="32" font-weight="700" fill="#e2dbc8" letter-spacing="2">OE3IDE</text>

    <g fill="none" stroke-width="3">
      <path d="M228 235L247 278M270 330L337 480M294 180L310 262M318 305L348 480M356 145L358 262M360 298L370 480" stroke="#cf8a82"/>
      <path d="M388 155L380 480M445 182L432 265M420 305L400 480" stroke="#e2c576"/>
      <path d="M472 200L440 335L405 480M515 225L488 285M510 340L425 485M553 262L530 300M520 345L455 490M578 295L462 492M610 325L595 345M575 385L482 495M660 405L635 418M612 440L505 500" stroke="#9bd6a0"/>
    </g>
    <g fill="#444" text-anchor="middle" font-size="25">
      <text x="258" y="310" transform="rotate(-20 258 300)" font-size="32">&#8734;</text><text x="313" y="293">5</text><text x="360" y="290">3</text><text x="427" y="295">2</text><text x="480" y="306" transform="rotate(8 480 297)">1.6</text><text x="525" y="327" transform="rotate(15 525 318)">1.4</text><text x="585" y="369" transform="rotate(25 585 360)">1.2</text><text x="628" y="434" transform="rotate(35 628 425)">1.1</text>
    </g>
    <g id="swrTicks"></g>
    <g fill="none">
      <path d="M72 437Q172 183 385 115" stroke="#24566e" stroke-width="7"/>
      <path d="M685 442Q578 185 365 115" stroke="#24566e" stroke-width="7"/>
      <path d="M262 98L385 130M500 88L365 130" stroke="#111" stroke-width="6"/>
      <path d="M55 437L405 572M700 445L350 572" stroke="#111" stroke-width="5"/>
      <path d="M55 436L80 442M678 446L700 441" stroke="#111" stroke-width="9"/>
    </g>
    <g fill="#9b978b" font-size="16" text-anchor="middle">
      <text x="38" y="434">0</text><text x="140" y="263" transform="rotate(-45 140 258)">10</text><text x="193" y="208" transform="rotate(-45 193 203)">20</text><text x="238" y="170" transform="rotate(-40 238 165)">30</text><text x="283" y="140" transform="rotate(-35 283 135)">40</text><text x="332" y="78">16</text><text x="272" y="60" transform="rotate(-5 272 55)">20W</text>
      <text x="710" y="441">0</text><text x="647" y="320">1</text><text x="612" y="267">2</text><text x="562" y="215">4</text><text x="515" y="177">6</text><text x="473" y="145">8</text><text x="393" y="86" transform="rotate(-8 393 80)">70</text><text x="428" y="74" transform="rotate(-8 428 68)">80</text><text x="490" y="58" transform="rotate(-8 490 52)">100W</text>
    </g>
    <text x="120" y="198" transform="rotate(-50 120 190)" font-size="27" font-weight="500" fill="#2a2a2a" text-anchor="middle" letter-spacing="1">FORWARD</text>
    <text x="627" y="203" transform="rotate(46 627 195)" font-size="27" font-weight="500" fill="#2a2a2a" text-anchor="middle" letter-spacing="1">REFLECTED</text>
    <text x="205" y="423" font-size="25" font-weight="700" fill="#b5433c" text-anchor="middle">SWR</text>
  </svg>
</div>

<script>
    const NS = "http://www.w3.org/2000/svg";
    let seed = 4711;
    function rnd() { seed = (seed * 16807) % 2147483647; return seed / 2147483647; }
    function el(parent, tag, attrs, text) {
        const n = document.createElementNS(NS, tag);
        for (const k in attrs) n.setAttribute(k, attrs[k]);
        if (text) n.textContent = text;
        parent.appendChild(n);
        return n;
    }

    // panadapter grid and labels
    const grid = document.getElementById("panGrid");
    const labels = document.getElementById("panText");
    for (let x = 124 + 3; x < 610; x += 9.5) el(grid, "path", { d: `M${x} 167V295`, stroke: "#1b1b1b", "stroke-width": .6 });
    for (let y = 178; y < 295; y += 10.7) el(grid, "path", { d: `M124 ${y}H610`, stroke: "#1b1b1b", "stroke-width": .6 });
    el(grid, "path", { d: "M124 243H610", stroke: "#5a5a1c", "stroke-width": .6, "stroke-dasharray": "1 1" });
    el(grid, "path", { d: "M124 285H610", stroke: "#7a3a10", "stroke-width": .6, "stroke-dasharray": "1 1" });
    for (let i = 0; i < 10; i++) {
        const x = 161.5 + i * 47.5;
        el(grid, "path", { d: `M${x} 167V295`, stroke: "#808080", "stroke-width": .9 });
        el(labels, "text", { x: x + 3, y: 163, "text-anchor": "middle" }, "3." + (680 + i * 10));
        el(labels, "text", { x: x + 3, y: 303.5, "text-anchor": "middle" }, "3." + (680 + i * 10));
    }
    el(labels, "text", { x: 130, y: 163 }, "60");
    [-56, -61, -66, -71, -76, -81, -86, -91, -96, -101, -106].forEach((db, i) => {
        el(labels, "text", { x: 134, y: 180 + i * 10.7, "text-anchor": "middle" }, String(db));
    });
    el(labels, "rect", { x: 145, y: 240, width: 4, height: 4, fill: "#c8d860" });
    el(labels, "text", { x: 150, y: 244, "font-size": 4.5, fill: "#aaa" }, "-0x");
    el(labels, "rect", { x: 145, y: 280, width: 4.5, height: 4.5, fill: "#e07a20" });
    el(labels, "text", { x: 151, y: 285, fill: "#d8a020" }, "-106.9");

    // spectrum
    const peaks = [[177,12,1.2],[196,8,1],[206,32,2.6],[239,78,.8],[243,36,3],[247,44,3.5],[250,34,2],[274,62,1],[271,17,3],[304,56,.7],[351,11,.5],[446,14,.4],[590,35,.5],[596,7,.5],[566,8,10],[553,4,8]];
    const grayPeaks = [[177,20,.5],[204,22,2],[248,44,.9],[243,22,.6],[262,20,.8],[276,22,1],[304,34,.6],[351,10,.4],[526,30,.4],[530,38,.4],[534,30,.4],[537,9,.4],[446,8,.4],[590,14,.4]];
    const bump = (list, x) => list.reduce((s, p) => s + p[1] * Math.exp(-((x - p[0]) ** 2) / (2 * p[2] ** 2)), 0);
    let fill = "124,295.5", gray = "";
    for (let x = 124; x <= 610; x += 1) {
        const y = 286.5 - rnd() * 3.2 - bump(peaks, x);
        fill += ` ${x},${y.toFixed(1)}`;
        const g = 266 + (rnd() - .5) * 6.5 - bump(grayPeaks, x);
        gray += ` ${x},${g.toFixed(1)}`;
    }
    fill += " 610,295.5";
    const trace = document.getElementById("panTrace");
    el(trace, "polyline", { points: gray, fill: "none", stroke: "#a8a8a8", "stroke-width": .8 });
    el(trace, "polygon", { points: fill, fill: "url(#peakFill)" });

    // waterfall
    const fall = document.getElementById("fall");
    el(fall, "rect", { x: 124, y: 306, width: 486, height: 72, fill: "#02021a" });
    el(fall, "rect", { x: 124, y: 319, width: 486, height: 10, fill: "#07075c" });
    el(fall, "rect", { x: 124, y: 323.2, width: 486, height: 1.8, fill: "#2222cc" });
    for (let x = 524; x < 572; x += 3) el(fall, "rect", { x: x, y: 306, width: 2, height: 72, fill: "#050550", opacity: (x - 524) / 140 + .05 });
    const cols = [ // x from, x to, chance, colours, gaps in y
        [172, 178, .28, ["#10249a", "#1434d8", "#2a5cf0"], []],
        [197, 209, .3, ["#0c2090", "#1030c0", "#1c48e8"], []],
        [238, 250, .62, ["#1c48e8", "#2a6cf0", "#45a0f0", "#90e0f0"], [338, 356]],
        [271, 275, .7, ["#1c48e8", "#45a0f0", "#80e0d0"], [319, 319]]
    ];
    cols.forEach(c => {
        el(fall, "rect", { x: c[0], y: 306, width: c[1] - c[0], height: 72, fill: "#05054a", opacity: .6 });
        for (let y = 306; y < 378; y += 2) {
            if (y >= c[4][0] && y < c[4][1]) continue;
            for (let x = c[0]; x < c[1]; x += 1.6) {
                if (rnd() < c[2]) el(fall, "rect", { x: x, y: y, width: 1.6, height: 2, fill: c[3][Math.floor(rnd() * c[3].length)] });
            }
        }
    });
    el(fall, "rect", { x: 303.2, y: 306, width: 1.8, height: 72, fill: "#3fb8a8" });
    [312, 335, 357, 375].forEach(y => {
        [525, 529, 533, 537].forEach(x => el(fall, "rect", { x: x, y: y, width: 1, height: 3.5, fill: "#4a6ab0" }));
    });
    el(fall, "rect", { x: 590, y: 306, width: 1.5, height: 72, fill: "#14149a" });
    el(fall, "rect", { x: 264, y: 314, width: 3, height: 2, fill: "#3a80f0" });

    // tick marks along the meter arcs, in the svg's own units
    function ticks(g, p0, c, p2, n, len, colour, width) {
        for (let i = 0; i <= n; i++) {
            const t = i / n, u = 1 - t;
            const x = u * u * p0[0] + 2 * u * t * c[0] + t * t * p2[0];
            const y = u * u * p0[1] + 2 * u * t * c[1] + t * t * p2[1];
            const dx = 2 * u * (c[0] - p0[0]) + 2 * t * (p2[0] - c[0]);
            const dy = 2 * u * (c[1] - p0[1]) + 2 * t * (p2[1] - c[1]);
            const m = Math.hypot(dx, dy);
            const l = i % 2 ? len * .6 : len;
            el(g, "line", { x1: x, y1: y, x2: x + dy / m * l, y2: y - dx / m * l, stroke: colour, "stroke-width": width });
        }
    }
    const mt = document.getElementById("mmTicks");
    ticks(mt, [92,122], [253.5,73.5], [414,75], 8, 11, "#111", 3);
    ticks(mt, [418,75], [575,76.5], [735,128], 6, 10, "#d33a30", 2.5);
    ticks(mt, [100,135], [415,43], [730,130], 24, -9, "#111", 2.5);
    ticks(mt, [146,180], [415,100], [682,178], 16, 8, "#111", 2.5);
    ticks(mt, [185,213], [415,153], [650,212], 12, 8, "#111", 2.5);
    ticks(mt, [218,250], [415,214], [615,250], 12, 8, "#111", 2.5);

    const st = document.getElementById("swrTicks");
    ticks(st, [72,437], [172,183], [385,115], 14, 16, "#111", 5);
    ticks(st, [365,115], [578,185], [685,442], 14, 16, "#111", 5);
    ticks(st, [262,98], [323,112], [385,130], 8, 14, "#111", 5);
    ticks(st, [365,130], [432,110], [500,88], 8, 14, "#111", 5);
</script>
<script src="https://cdn.jsdelivr.net/npm/bootstrap@5.3.0/dist/js/bootstrap.bundle.min.js"></script>
</body>
</html>
